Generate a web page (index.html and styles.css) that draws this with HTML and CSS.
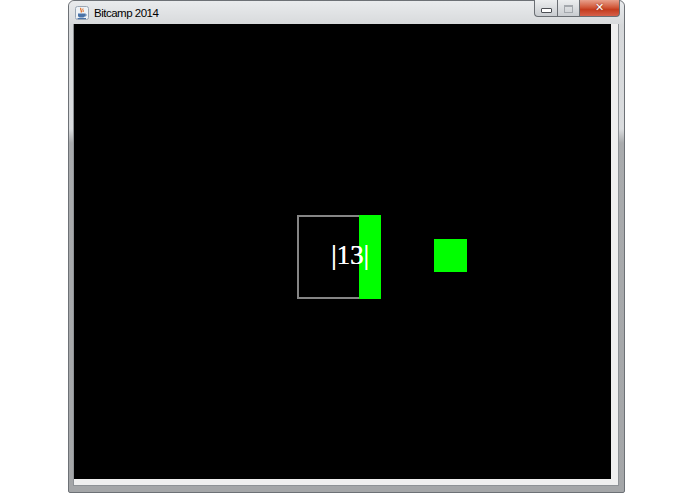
FILE: index.html
```html
<!DOCTYPE html>
<html>
<head>
<meta charset="utf-8">
<link rel="stylesheet" href="styles.css">
</head>
<body>
<div class="window">
  <div class="titlebar">
    <svg class="appicon" width="14" height="14" viewBox="0 0 14 14">
      <rect x="0.5" y="0.5" width="13" height="13" rx="2" fill="#eef2f6" stroke="#9aa6b4"/>
      <path d="M6 2 C4.5 3.5 7.5 4.5 6 6.5" stroke="#e0661a" stroke-width="1.2" fill="none"/>
      <path d="M8 2.5 C7 3.5 9 4.5 8 6" stroke="#e0661a" stroke-width="1" fill="none"/>
      <path d="M3 7.5 H10 V9.5 C10 11 9 11.5 6.5 11.5 C4 11.5 3 11 3 9.5 Z" fill="#4a73a8"/>
      <path d="M10 8 C11.8 8 11.8 10 10 10" stroke="#4a73a8" stroke-width="1" fill="none"/>
      <rect x="2.5" y="12" width="8.5" height="1" fill="#4a73a8"/>
    </svg>
    <span class="title">Bitcamp 2014</span>
    <div class="buttons">
      <div class="btn min"><span class="minbar"></span></div>
      <div class="btn max"><span class="maxbox"></span></div>
      <div class="btn close"><span class="x">✕</span></div>
    </div>
  </div>
  <div class="client">
    <div class="canvas">
      <div class="outline"></div>
      <div class="bar"></div>
      <div class="num">|13|</div>
      <div class="square"></div>
    </div>
  </div>
</div>
</body>
</html>
```
FILE: styles.css
```css
html, body {
  margin: 0;
  padding: 0;
  background: #ffffff;
}
body {
  width: 695px;
  height: 494px;
  overflow: hidden;
}
.window {
  margin-left: 68px;
  width: 555px;
  height: 491px;
  border: 1px solid #6d7176;
  border-radius: 6px 6px 2px 2px;
  background: linear-gradient(to bottom, #e4e6e8 0px, #d6d8da 24px, #dadcde 128px, #a9abad 142px, #a4a6a8 100%);
  display: flex;
  flex-direction: column;
}
.titlebar {
  height: 23px;
  display: flex;
  align-items: flex-start;
  background: linear-gradient(to bottom, #e9ebed, #d8dadc);
  border-radius: 6px 6px 0 0;
}
.appicon {
  margin: 5px 0 0 6px;
  flex: none;
}
.title {
  font-family: "Liberation Sans", Arial, sans-serif;
  font-size: 11.5px;
  line-height: 14px;
  margin: 5px 0 0 5px;
  color: #000;
  letter-spacing: -0.5px;
}
.buttons {
  margin-left: auto;
  margin-right: 4px;
  display: flex;
  height: 17px;
  margin-top: -1px;
}
.btn {
  height: 16px;
  border: 1px solid #6a6e73;
  border-top: none;
  display: flex;
  align-items: center;
  justify-content: center;
}
.min {
  width: 22px;
  border-radius: 0 0 0 4px;
  border-right: none;
  background: linear-gradient(to bottom, #eceeef, #c9ccd0);
}
.max {
  width: 21px;
  border-right: none;
  background: linear-gradient(to bottom, #eceeef, #c9ccd0);
}
.close {
  width: 39px;
  border-radius: 0 0 4px 0;
  background: linear-gradient(to bottom, #e8a08c 0%, #d25a3c 45%, #c43c1e 60%, #d6604a 100%);
}
.minbar {
  width: 9px;
  height: 3px;
  background: #fff;
  border: 1px solid #4c4f54;
  margin-top: 5px;
  border-radius: 1px;
}
.maxbox {
  width: 7px;
  height: 5px;
  border: 1px solid #a4a8ad;
  border-top-width: 2px;
  background: transparent;
  margin-top: 1px;
}
.x {
  color: #fff;
  font-family: "DejaVu Sans", sans-serif;
  font-size: 11px;
  font-weight: bold;
  line-height: 16px;
  text-shadow: 0 0 2px #7a2010;
}
.client {
  margin: 0 5px 0 4px;
  height: 462px;
  background: #efefef;
  border: 1px solid #8e9296;
  border-top: none;
  box-sizing: border-box;
  padding: 0;
}
.canvas {
  position: relative;
  width: 537px;
  height: 455px;
  background: #000;
  overflow: hidden;
}
.outline {
  position: absolute;
  left: 223px;
  top: 191px;
  width: 80px;
  height: 80px;
  border: 2px solid #858585;
}
.bar {
  position: absolute;
  left: 285px;
  top: 191px;
  width: 22px;
  height: 84px;
  background: #00ff00;
}
.num {
  position: absolute;
  left: 257px;
  top: 218px;
  font-family: "Liberation Serif", "Times New Roman", serif;
  font-size: 27px;
  line-height: 27px;
  color: #fff;
  white-space: nowrap;
  text-shadow: 0.4px 0 0 #fff;
}
.square {
  position: absolute;
  left: 360px;
  top: 215px;
  width: 33px;
  height: 33px;
  background: #00ff00;
}
```
